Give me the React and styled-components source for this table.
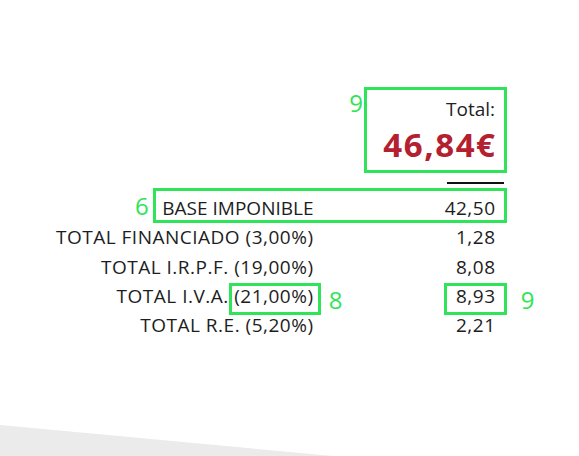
import React from 'react'
import styled, { createGlobalStyle } from 'styled-components'

const GlobalStyle = createGlobalStyle`
  html, body {
    margin: 0;
    padding: 0;
    background: #ffffff;
  }
  body {
    font-family: "Open Sans", "Noto Sans", "Liberation Sans", sans-serif;
    color: #1d1d1d;
  }
`

const rows = [
  { label: 'BASE IMPONIBLE', value: '42,50', mark: true },
  { label: 'TOTAL FINANCIADO (3,00%)', value: '1,28' },
  { label: 'TOTAL I.R.P.F. (19,00%)', value: '8,08' },
  { label: 'TOTAL I.V.A.', pct: '(21,00%)', value: '8,93', markPct: true },
  { label: 'TOTAL R.E. (5,20%)', value: '2,21' },
]

const App = () => {
  return (
    <Page>
      <GlobalStyle />
      <TotalArea>
        <TotalBox>
          <Tag $side='left'>9</Tag>
          <TotalLabel>Total:</TotalLabel>
          <TotalAmount>46,84€</TotalAmount>
        </TotalBox>
      </TotalArea>
      <Rule />
      <Table>
        {rows.map((r) => (
          <Row key={r.label} $mark={r.mark}>
            {r.mark && <Tag $side='left' $row>6</Tag>}
            <Label $tight={r.mark}>
              {r.label}
              {r.pct && (
                <>
                  {' '}
                  <Boxed>
                    {r.pct}
                    <Tag $side='right' $inline>8</Tag>
                  </Boxed>
                </>
              )}
            </Label>
            <Value>
              {r.markPct ? (
                <Boxed $wide>
                  {r.value}
                  <Tag $side='right' $inline $far>9</Tag>
                </Boxed>
              ) : (
                r.value
              )}
            </Value>
          </Row>
        ))}
      </Table>
      <Floor />
    </Page>
  )
}

const green = '#2fe458'

const Page = styled.div`
  position: relative;
  width: 579px;
  height: 456px;
  overflow: hidden;
  display: flex;
  flex-direction: column;
`

const TotalArea = styled.div`
  display: flex;
  justify-content: flex-end;
  padding: 87px 72px 0 0;
`

const TotalBox = styled.div`
  position: relative;
  border: 3px solid ${green};
  padding: 6px 9px 3px 16px;
  display: flex;
  flex-direction: column;
  align-items: flex-end;
`

const TotalLabel = styled.div`
  font-size: 19px;
  line-height: 26px;
  color: #222;
`

const TotalAmount = styled.div`
  font-size: 33px;
  line-height: 45px;
  font-weight: 700;
  color: #b4202f;
  letter-spacing: 1.6px;
  margin-right: -1.6px;
`

const Rule = styled.div`
  align-self: flex-end;
  width: 57px;
  height: 2px;
  background: #111;
  margin: 9px 75px 0 0;
`

const Table = styled.div`
  display: flex;
  flex-direction: column;
  margin-top: 10px;
`

const Row = styled.div`
  position: relative;
  width: 495px;
  display: grid;
  grid-template-columns: 313px 182px;
  font-size: 19px;
  letter-spacing: 0.5px;
  line-height: 29.3px;
  color: #1d1d1d;

  &::after {
    content: '';
    display: ${(p) => (p.$mark ? 'block' : 'none')};
    position: absolute;
    left: 153px;
    right: -12px;
    top: -6px;
    bottom: 0;
    border: 3px solid ${green};
    pointer-events: none;
  }
`

const Label = styled.div`
  text-align: right;
  white-space: nowrap;
  margin-right: -0.5px;
  letter-spacing: ${(p) => (p.$tight ? '0' : '0.5px')};
`

const Value = styled.div`
  text-align: right;
  margin-right: -0.5px;
`

const Boxed = styled.span`
  position: relative;
  display: inline-block;

  &::after {
    content: '';
    position: absolute;
    left: ${(p) => (p.$wide ? '-12px' : '-5px')};
    right: ${(p) => (p.$wide ? '-11px' : '-7px')};
    top: 1px;
    bottom: -4px;
    border: 3px solid ${green};
  }
`

const Tag = styled.span`
  position: absolute;
  top: ${(p) => (p.$row ? '-3px' : p.$inline ? '3px' : '-2px')};
  ${(p) => (p.$side === 'left' ? 'left: -18px;' : `right: ${p.$far ? '-39px' : '-29px'};`)}
  ${(p) => (p.$row ? 'left: 135px;' : '')}
  font-size: 24px;
  line-height: 29px;
  font-weight: 500;
  color: ${green};
  letter-spacing: 0;
`

const Floor = styled.div`
  margin-top: auto;
  height: 31px;
  background: #ebebeb;
  clip-path: polygon(0 0, 333px 100%, 0 100%);
`

export default App
